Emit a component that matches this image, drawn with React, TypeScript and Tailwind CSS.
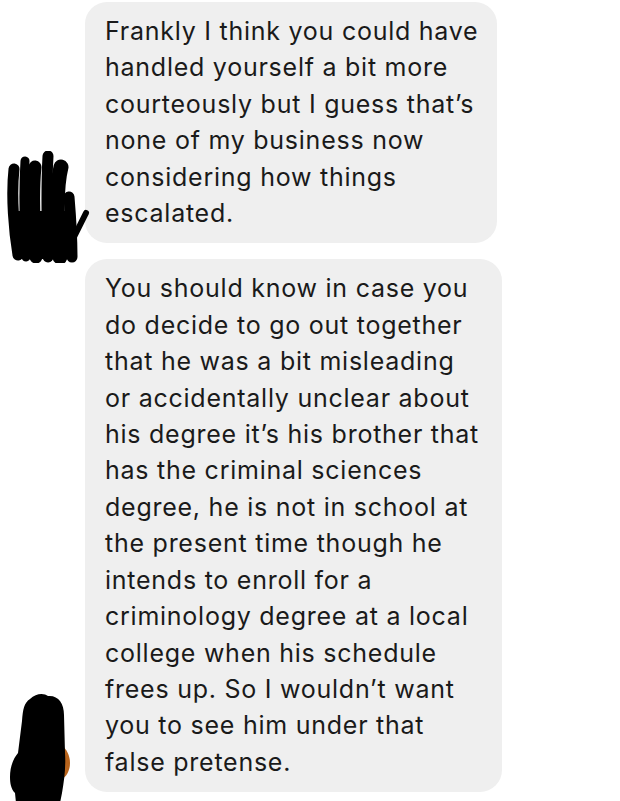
const firstMessage = [
  "Frankly I think you could have",
  "handled yourself a bit more",
  "courteously but I guess that\u2019s",
  "none of my business now",
  "considering how things",
  "escalated.",
];

const secondMessage = [
  "You should know in case you",
  "do decide to go out together",
  "that he was a bit misleading",
  "or accidentally unclear about",
  "his degree it\u2019s his brother that",
  "has the criminal sciences",
  "degree, he is not in school at",
  "the present time though he",
  "intends to enroll for a",
  "criminology degree at a local",
  "college when his schedule",
  "frees up. So I wouldn\u2019t want",
  "you to see him under that",
  "false pretense.",
];

const ScribbleHand = () => (
  <svg width="92" height="112" viewBox="0 0 92 112" className="absolute left-0 top-[-92px]">
    <g stroke="#000" strokeLinecap="round" fill="none">
      <path d="M14 18 C11 45 14 80 18 104" strokeWidth="11" />
      <path d="M25 10 C23 40 24 75 26 106" strokeWidth="9" />
      <path d="M35 16 C32 45 34 78 36 106" strokeWidth="13" />
      <path d="M48 5 C46 40 47 75 48 106" strokeWidth="11" />
      <path d="M61 16 C55 40 57 75 60 106" strokeWidth="15" />
      <path d="M69 46 C71 70 72 90 72 106" strokeWidth="11" />
      <path d="M71 92 L86 62" strokeWidth="6" />
    </g>
    <path d="M18 60 L70 60 L76 108 L18 108 Z" fill="#000" />
  </svg>
);

const ScribbleHead = () => (
  <svg width="72" height="110" viewBox="0 0 72 110" className="absolute left-0 top-[-99px]">
    <path d="M62 52 C66 56 70 62 70 70 C70 78 66 84 62 86 Z" fill="#b8641c" />
    <path
      d="M30 6 C36 0 44 0 48 3 C58 2 64 10 64 22 L65 60 C66 75 64 88 62 100 L60 110 L16 110 L15 100 C11 96 10 90 10 84 C10 74 13 66 18 60 L22 28 C23 16 24 10 30 6 Z"
      fill="#000"
    />
  </svg>
);

const Bubble = ({ lines, width }: { lines: string[]; width: string }) => (
  <div className={`${width} rounded-[22px] bg-[#efefef] px-5 pt-[11px] pb-[12px]`}>
    {lines.map((line) => (
      <div
        key={line}
        className="whitespace-nowrap text-[25px] leading-[36.4px] tracking-[0.75px] text-[#1a1a1a]"
      >
        {line}
      </div>
    ))}
  </div>
);

const App = () => {
  return (
    <div
      className="h-[801px] w-[620px] overflow-hidden bg-white pt-[2px]"
      style={{ fontFamily: "Inter, 'Liberation Sans', sans-serif" }}
    >
      <div className="flex flex-col gap-4">
        {/* first message */}
        <div className="flex items-end">
          <div className="relative h-0 w-[85px] shrink-0">
            <ScribbleHand />
          </div>
          <Bubble lines={firstMessage} width="w-[412px]" />
        </div>

        {/* second message */}
        <div className="flex items-end">
          <div className="relative h-0 w-[85px] shrink-0">
            <ScribbleHead />
          </div>
          <Bubble lines={secondMessage} width="w-[417px]" />
        </div>
      </div>
    </div>
  );
};

export default App;
